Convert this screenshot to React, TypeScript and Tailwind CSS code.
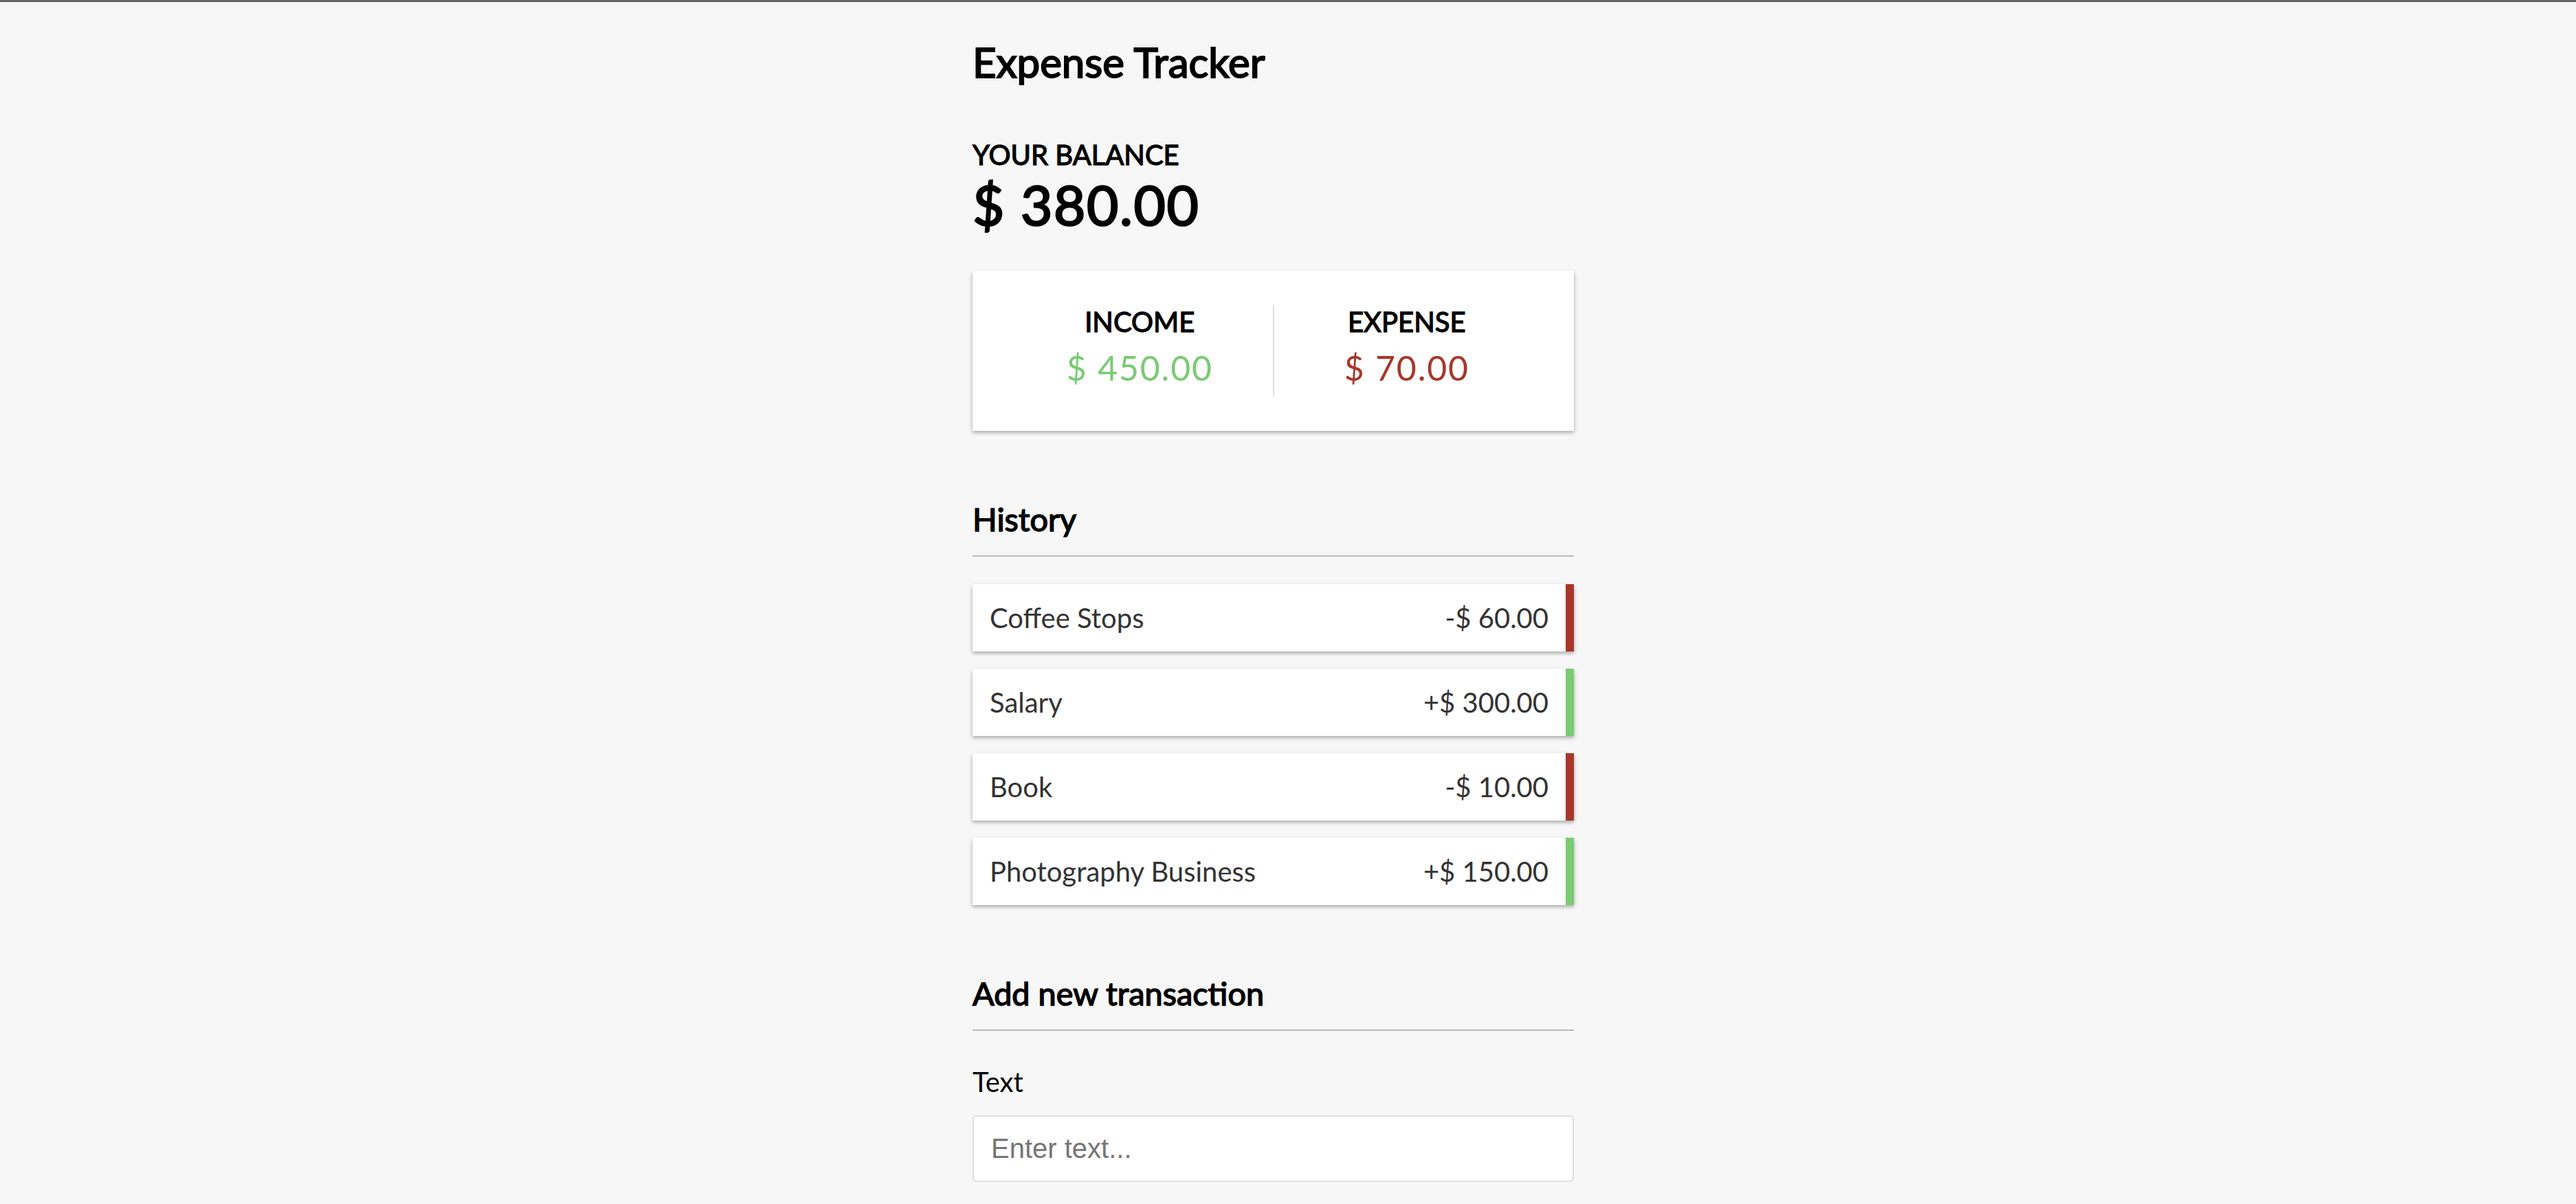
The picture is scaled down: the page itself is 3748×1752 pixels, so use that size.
type Transaction = {
  id: number
  text: string
  amount: number
}

const transactions: Transaction[] = [
  { id: 1, text: 'Coffee Stops', amount: -60 },
  { id: 2, text: 'Salary', amount: 300 },
  { id: 3, text: 'Book', amount: -10 },
  { id: 4, text: 'Photography Business', amount: 150 },
]

const money = (n: number) => `$ ${Math.abs(n).toFixed(2)}`

// the original loads Lato 400 only, so headings get the browser's synthetic bold
export default function App() {
  const amounts = transactions.map((t) => t.amount)
  const total = amounts.reduce((acc, n) => acc + n, 0)
  const income = amounts.filter((n) => n > 0).reduce((acc, n) => acc + n, 0)
  const expense = amounts.filter((n) => n < 0).reduce((acc, n) => acc + n, 0)

  return (
    <div className="min-h-screen bg-[#f7f7f7] font-['Lato',sans-serif] text-black">
      <div className="h-[3px] bg-[#646569]" />
      <div className="flex justify-center pr-[43px] pb-[60px]">
        <div className="w-[875px]">
          <h2 className="mt-[51px] text-[60px] leading-[72px] font-normal [-webkit-text-stroke:2px_black]">
            Expense Tracker
          </h2>

          <h4 className="mt-[75px] text-[40px] leading-[48px] font-normal uppercase [-webkit-text-stroke:1.3px_black]">
            Your Balance
          </h4>
          <h1 className="text-[80px] leading-[96px] font-normal tracking-[1.6px] [-webkit-text-stroke:2.5px_black]">
            {money(total)}
          </h1>

          <div className="mt-[49px] flex bg-white p-[50px] shadow-[0_2.5px_7.5px_rgba(0,0,0,0.12),0_2.5px_5px_rgba(0,0,0,0.24)]">
            <div className="flex-1 border-r-2 border-[#dedede] text-center">
              <h4 className="text-[40px] leading-[48px] font-normal uppercase [-webkit-text-stroke:1.3px_black]">
                Income
              </h4>
              <p className="my-[12.5px] text-[50px] leading-[60px] tracking-[1.8px] text-[#7acb73]">
                {money(income)}
              </p>
            </div>
            <div className="flex-1 text-center">
              <h4 className="text-[40px] leading-[48px] font-normal uppercase [-webkit-text-stroke:1.3px_black]">
                Expense
              </h4>
              <p className="my-[12.5px] text-[50px] leading-[60px] tracking-[1.8px] text-[#a8372a]">
                {money(expense)}
              </p>
            </div>
          </div>

          <h3 className="mt-[100px] border-b-[2.5px] border-[#bbb] pb-[25px] text-[46.8px] leading-[56px] font-normal [-webkit-text-stroke:1.5px_black]">
            History
          </h3>
          <ul className="mt-[40px] flex flex-col gap-[25px]">
            {transactions.map((t) => (
              <li
                key={t.id}
                className={`flex justify-between bg-white px-[25px] py-[25px] text-[40px] leading-[48px] text-[#333] shadow-[0_2.5px_7.5px_rgba(0,0,0,0.12),0_2.5px_5px_rgba(0,0,0,0.24)] border-r-[12px] ${
                  t.amount < 0 ? 'border-[#a8372a]' : 'border-[#7acb73]'
                }`}
              >
                {t.text}
                <span>
                  {t.amount < 0 ? '-' : '+'}
                  {money(t.amount)}
                </span>
              </li>
            ))}
          </ul>

          <h3 className="mt-[100px] border-b-[2.5px] border-[#bbb] pb-[25px] text-[46.8px] leading-[56px] font-normal [-webkit-text-stroke:1.5px_black]">
            Add new transaction
          </h3>
          <form>
            <label htmlFor="text" className="mt-[50px] mb-[25px] block text-[40px] leading-[48px]">
              Text
            </label>
            <input
              id="text"
              type="text"
              placeholder="Enter text..."
              className="block h-[97px] w-full rounded-[5px] border-2 border-[#dedede] bg-white px-[25px] font-['Liberation_Sans',Arial,sans-serif] text-[40px] placeholder:text-[#757575] focus:outline-none"
            />
          </form>
        </div>
      </div>
    </div>
  )
}
